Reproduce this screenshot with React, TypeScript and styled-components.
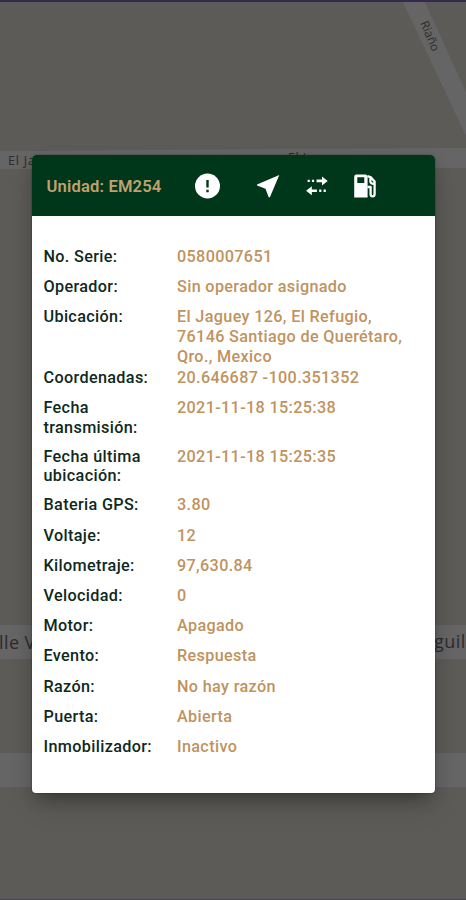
import React from "react";
import styled, { createGlobalStyle } from "styled-components";

const GlobalStyle = createGlobalStyle`
  html, body { margin: 0; padding: 0; }
  body { background: #5c5b58; font-family: Roboto, sans-serif; overflow: hidden; }
  * { box-sizing: border-box; }
`;

const Screen = styled.main`
  position: relative;
  height: 900px;
  padding: 155px 31px 0 31.5px;
  overflow: hidden;
  background: #5c5b58;
`;

const MapCanvas = styled.svg`
  position: absolute;
  inset: 0;
  width: 100%;
  height: 100%;
`;

const Dialog = styled.section`
  position: relative;
  height: 638px;
  border-radius: 4px;
  overflow: hidden;
  background: #fff;
  box-shadow: 0 13px 18px -8px rgba(0, 0, 0, 0.3), 0 18px 30px 0 rgba(0, 0, 0, 0.05),
    0 5px 16px 1px rgba(0, 0, 0, 0.1), 0 0 2px rgba(0, 0, 0, 0.4);
`;

const Header = styled.header`
  display: flex;
  align-items: center;
  height: 60.5px;
  padding: 2px 0 0 15px;
  background: #00361a;
`;

const Title = styled.h1`
  margin: 0;
  width: 146.5px;
  padding-top: 1px;
  font-size: 16.6px;
  line-height: 20px;
  font-weight: 600;
  letter-spacing: 0.15px;
  white-space: nowrap;
  color: #c2a16f;
`;

const Actions = styled.div`
  display: grid;
  grid-template-columns: 60px 49px 48.2px 29px;
`;

const IconButton = styled.button`
  display: flex;
  padding: 0;
  border: 0;
  background: none;
  color: #fff;
  svg { display: block; width: 29px; height: 29px; }
`;

const Details = styled.dl`
  margin: 0;
  padding: 31.2px 22px 0 12px;
`;

const rowHeights = { single: 30.2, double: 48.8, triple: 60.6 };

const Row = styled.div<{ $size: keyof typeof rowHeights }>`
  display: grid;
  grid-template-columns: 133.5px 1fr;
  height: ${(p) => rowHeights[p.$size]}px;
  font-size: 16.2px;
  line-height: 19.8px;
  font-weight: 500;
  letter-spacing: 0.35px;
`;

const Label = styled.dt`
  padding-right: 15px;
  color: #10291d;
`;

const Value = styled.dd`
  margin: 0;
  color: #c0935e;
`;

type Detail = [string, string, (keyof typeof rowHeights)?];

const details: Detail[] = [
  ["No. Serie:", "0580007651"],
  ["Operador:", "Sin operador asignado"],
  ["Ubicación:", "El Jaguey 126, El Refugio, 76146 Santiago de Querétaro, Qro., Mexico", "triple"],
  ["Coordenadas:", "20.646687 -100.351352"],
  ["Fecha transmisión:", "2021-11-18 15:25:38", "double"],
  ["Fecha última ubicación:", "2021-11-18 15:25:35", "double"],
  ["Bateria GPS:", "3.80"],
  ["Voltaje:", "12"],
  ["Kilometraje:", "97,630.84"],
  ["Velocidad:", "0"],
  ["Motor:", "Apagado"],
  ["Evento:", "Respuesta"],
  ["Razón:", "No hay razón"],
  ["Puerta:", "Abierta"],
  ["Inmobilizador:", "Inactivo"],
];

const StreetMap = () => (
  <MapCanvas viewBox="0 0 466 900" aria-hidden="true">
    <g fill="#656566">
      <path d="M402 0H424L466 92V136Z" />
      <path d="M0 151L466 148V168L0 169Z" />
      <path d="M0 625H466V659H0Z" />
      <path d="M0 753H466V787H0Z" />
    </g>
    <path d="M0 0H466V2H0Z" fill="#35294f" />
    <path d="M0 899H466V900H0Z" fill="#4d4454" />
    <g fill="#2c2c2c" fontFamily="Open Sans, sans-serif">
      <text x="8" y="164.5" fontSize="12.5" letterSpacing="0.8">El Ja</text>
      <text x="288" y="162" fontSize="12.5" letterSpacing="0.5">El J</text>
      <text transform="translate(420 23) rotate(67)" fontSize="12">Riaño</text>
      <g fontSize="18" letterSpacing="0.4">
        <text x="-1" y="649">lle V</text>
        <text x="434" y="648" letterSpacing="0.5">guil</text>
      </g>
    </g>
  </MapCanvas>
);

const AlertIcon = () => (
  <svg viewBox="0 0 29 29" fill="none">
    <circle cx="14.5" cy="14" r="12.5" fill="currentColor" />
    <path d="M14.5 8V15.4M14.5 17.8V20.2" stroke="#00361a" strokeWidth="2.4" />
  </svg>
);

const NavigateIcon = () => (
  <svg viewBox="0 0 29 29" fill="currentColor">
    <path d="M26.3 3L4 12.4V13.5L12.5 16.8L15.7 25.3H16.9Z" />
  </svg>
);

const TransferIcon = () => (
  <svg viewBox="0 0 29 29" fill="currentColor">
    <path d="M14.6 7.6H20V4.4L25.7 8.9L20 13.4V10.2H14.6Z" />
    <path d="M5.6 7.7H7.8V10.1H5.6ZM9.9 7.7H12.1V10.1H9.9Z" />
    <path d="M14.9 17.4H9.8V14.2L4.1 18.7L9.8 23.2V20H14.9Z" />
    <path d="M17.2 17.5H19.4V19.9H17.2ZM21.6 17.5H23.8V19.9H21.6Z" />
  </svg>
);

const FuelIcon = () => (
  <svg viewBox="0 0 29 29">
    <path
      fill="currentColor"
      fillRule="evenodd"
      d="M6.4 2.6H15.2Q17.6 2.6 17.6 5V25.6H4.2V5Q4.2 2.6 6.4 2.6ZM7.3 5.3V10.9H14.3V5.3Z"
    />
    <path
      fill="none"
      stroke="currentColor"
      strokeWidth="2.3"
      strokeLinejoin="round"
      d="M17.4 4.2L21 5.4L24.6 9.6V22Q24.6 24.4 22.6 24.4T20.6 22V15H17.4M20.4 5.5V9.2Q20.4 12 24.4 11.6"
    />
  </svg>
);

const actions = [
  { name: "Alertas", Icon: AlertIcon },
  { name: "Navegar", Icon: NavigateIcon },
  { name: "Recorrido", Icon: TransferIcon },
  { name: "Combustible", Icon: FuelIcon },
];

export default function App() {
  return (
    <>
      <GlobalStyle />
      <Screen>
        <StreetMap />
        <Dialog role="dialog" aria-label="Unidad EM254">
          <Header>
            <Title>Unidad: EM254</Title>
            <Actions>
              {actions.map(({ name, Icon }) => (
                <IconButton key={name} aria-label={name}>
                  <Icon />
                </IconButton>
              ))}
            </Actions>
          </Header>
          <Details>
            {details.map(([label, value, size = "single"]) => (
              <Row key={label} $size={size}>
                <Label>{label}</Label>
                <Value>{value}</Value>
              </Row>
            ))}
          </Details>
        </Dialog>
      </Screen>
    </>
  );
}
